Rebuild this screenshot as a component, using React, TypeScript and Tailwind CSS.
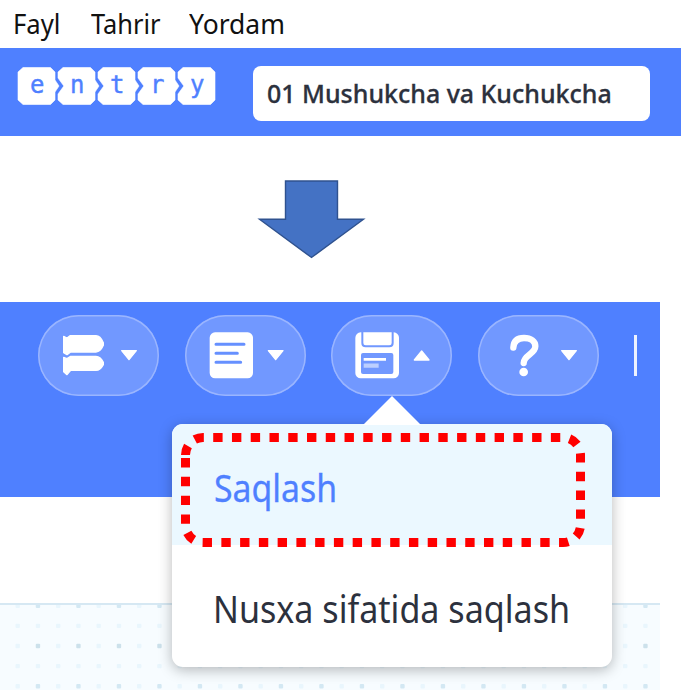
import type { ReactNode } from "react";

const LOGO_LETTERS = ["e", "n", "t", "r", "y"];

function LogoBlock({ letter, index }: { letter: string; index: number }) {
  const first = index === 0;
  const last = index === LOGO_LETTERS.length - 1;
  const left = first ? "L0 33V5" : "L0 33V27L5.800 19L0 11V5";
  const right = last ? "V33" : "V13L41 19L37 25V33";
  return (
    <div className="relative h-[38px] w-[40px] shrink-0">
      <svg className="block overflow-visible" width="40" height="38" viewBox="0 0 40 38">
        <path d={`M5 0.500H32.5L37 5${right}L32.500 37.500H5${left}Z`} fill="#fff" stroke="#fff" strokeWidth="0.6" strokeLinejoin="round" />
      </svg>
      <span className="absolute top-[4px] left-[12px] font-['DejaVu_Sans_Mono',monospace] text-[24px] leading-[28px] text-[#4f80ff] [-webkit-text-stroke:0.4px_#4f80ff]">
        {letter}
      </span>
    </div>
  );
}

function Pill({ viewBox, open, arrowX, children }: { viewBox: string; open?: boolean; arrowX: number; children: ReactNode }) {
  return (
    <button className="h-[81px] w-[121px] shrink-0 overflow-hidden rounded-full bg-[#7198ff] shadow-[inset_0_0_0_1.5px_#9ab5ff]">
      <svg className="block h-full w-full" viewBox={viewBox}>
        {children}
        <path
          d={open ? `M${arrowX + 1} 195h44l-22-27z` : `M${arrowX + 1} 167h44l-22 27z`}
          fill="#fff"
          stroke="#fff"
          strokeWidth="4"
          strokeLinejoin="round"
        />
      </svg>
    </button>
  );
}

function DotGrid() {
  const dots: ReactNode[] = [];
  for (let row = 0; row < 5; row++) {
    for (let col = 0; col < 32; col++) {
      const strong = row % 2 === 0 && col % 2 === 1;
      dots.push(
        <rect
          key={`${row}-${col}`}
          x={15.5 + col * 20.25}
          y={-1.5 + row * 20.15}
          width="4.4"
          height="4.4"
          rx="1"
          fill={strong ? (row === 2 ? "#cce1eb" : "#d3e8f3") : "#e9f6fd"}
        />,
      );
    }
  }
  return (
    <svg className="block" width="660" height="85" viewBox="0 0 660 85">
      {dots}
    </svg>
  );
}

export default function App() {
  return (
    <main className="flex h-[691px] w-[681px] flex-col overflow-hidden bg-white font-['Noto_Sans',sans-serif]">
      <nav className="flex h-[48px] shrink-0 pl-[13px] text-[27px] leading-[48px] whitespace-nowrap text-[#111]">
        <span className="w-[77.500px] origin-left scale-x-[0.95]">Fayl</span>
        <span className="w-[98px] origin-left scale-x-[0.94]">Tahrir</span>
        <span className="origin-left scale-x-[0.98]">Yordam</span>
      </nav>

      <header className="flex h-[88px] shrink-0 items-start bg-[#4f80ff] pl-[18px]">
        <div className="mt-[19px] flex w-[235px] shrink-0">
          {LOGO_LETTERS.map((letter, index) => (
            <LogoBlock key={letter} letter={letter} index={index} />
          ))}
        </div>
        <div className="mt-[18px] h-[54.500px] w-[396.500px] rounded-[8px] bg-white pl-[14px] text-[26px] leading-[55px] font-medium whitespace-nowrap text-[#2c313d] [-webkit-text-stroke:0.3px_#2c313d]">
          <span className="inline-block origin-left scale-x-[0.96]">01 Mushukcha va Kuchukcha</span>
        </div>
      </header>

      <div className="flex h-[166px] shrink-0 pt-[44px] pl-[257px]">
        <svg width="110" height="80" viewBox="257 180 110 80">
          <path d="M285.500 181H337.500V219.300H363.500L311.500 257.500L259.500 219.300H285.500Z" fill="#4472c4" stroke="#2f528f" strokeWidth="1.400" />
        </svg>
      </div>

      <section className="relative flex h-[388px] w-[660px] shrink-0 flex-col">
        <div className="flex h-[194.500px] shrink-0 items-start gap-[25.700px] bg-[#4f80ff] pt-[13px] pl-[38px]">
          <Pill viewBox="114 60 363 243" arrowX={364}>
            <g fill="#fff" stroke="#fff" strokeWidth="4" strokeLinejoin="round">
              <path d="M191 124L201 129L210 122H288Q301 122 310 143V151Q301 171 288 171H212L201 179L191 173Z" />
              <path d="M191 187L201 191L212 184H288Q301 184 310 202V209Q301 226 288 226H212L201 239L191 230Z" />
            </g>
          </Pill>
          <Pill viewBox="555 60 363 243" arrowX={804}>
            <rect x="629" y="112" width="130" height="138" rx="16" fill="#fff" />
            <path d="M648 148H732M648 175H712M648 202H722" stroke="#6690ff" strokeWidth="9" strokeLinecap="round" />
          </Pill>
          <Pill viewBox="35 60 363 243" open arrowX={284}>
            <rect x="108" y="112" width="131" height="138" rx="16" fill="#fff" />
            <path d="M129 111V144Q129 154 139 154H210Q220 154 220 144V111" fill="none" stroke="#7198ff" strokeWidth="6" />
            <rect x="125" y="174" width="97" height="63" rx="6" fill="#7198ff" />
            <path d="M133 193H200" stroke="#fff" strokeWidth="8" />
            <path d="M133 212H178" stroke="#bccfff" strokeWidth="13" />
          </Pill>
          <Pill viewBox="475 60 363 243" arrowX={725}>
            <path d="M581 158C582 138 594 129 613 129C634 129 647 139 647 154C647 177 612 180 612 204" fill="none" stroke="#fff" strokeWidth="19" strokeLinecap="round" />
            <circle cx="612" cy="231" r="13" fill="#fff" />
          </Pill>
          <span className="mt-[20px] ml-[9.500px] h-[41px] w-[3px] shrink-0 bg-[#edf2ff]" />
        </div>
        <div className="h-[106.500px] shrink-0 bg-white" />
        <div className="h-[87px] shrink-0 border-t-2 border-[#d6e8f3] bg-[#f7fcff]">
          <DotGrid />
        </div>

        <div className="absolute top-[121.500px] left-[172px] h-[243px] w-[440px] rounded-[11px] bg-white shadow-[0_3px_14px_rgba(0,0,0,0.28)]">
          <svg className="absolute -top-[29px] left-[188px]" width="64" height="30" viewBox="0 0 64 30">
            <path d="M3 30L32 1L61 30Z" fill="#fff" />
          </svg>
          <div className="h-[121.500px] rounded-t-[11px] bg-[#ebf8ff] pl-[42px] text-[38px] leading-[127px] whitespace-nowrap text-[#4f80ff] [-webkit-text-stroke:0.3px_#4f80ff]">
            <span className="inline-block origin-left scale-x-[0.89]">Saqlash</span>
          </div>
          <div className="h-[121.500px] pl-[41px] text-[38px] leading-[127px] whitespace-nowrap text-[#2c313d]">
            <span className="inline-block origin-left scale-x-[0.897]">Nusxa sifatida saqlash</span>
          </div>
          <svg className="absolute top-[8px] left-[8px]" width="406" height="116" viewBox="180 431.500 406 116">
            <path
              d="M185.500 454.500A17.500 17.500 0 0 1 203 437H563A17.500 17.500 0 0 1 580.500 454.500V524.500A17.500 17.500 0 0 1 563 542H203A17.500 17.500 0 0 1 185.500 524.500Z"
              fill="none"
              stroke="#ff0000"
              strokeWidth="9"
              strokeDasharray="9.380 9.380"
            />
          </svg>
        </div>
      </section>
    </main>
  );
}
